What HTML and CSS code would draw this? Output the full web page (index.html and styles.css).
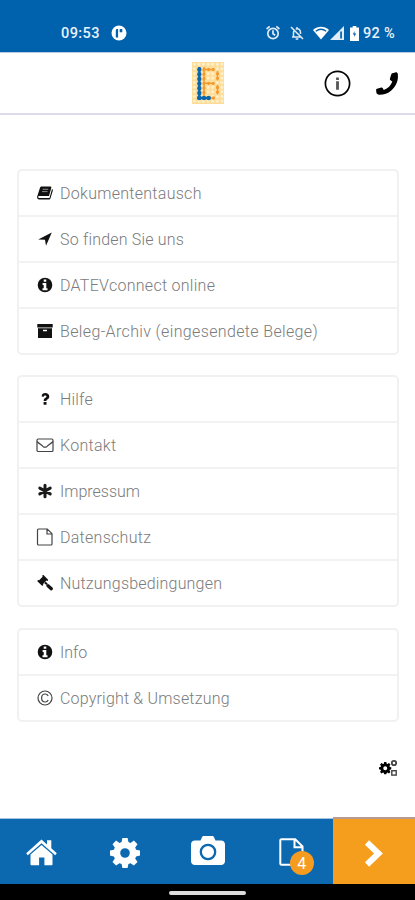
FILE: index.html
```html
<!DOCTYPE html>
<html lang="de">
<head>
<meta charset="utf-8">
<meta name="viewport" content="width=device-width">
<title>Mehr</title>
<link rel="stylesheet" href="styles.css">
</head>
<body>
<svg class="defs" aria-hidden="true">
  <defs>
    <symbol id="info" viewBox="0 0 16 16"><path fill-rule="evenodd" d="M8 .7a7.3 7.3 0 1 0 0 14.6A7.3 7.3 0 0 0 8 .7zM6.7 2.6h2.6v2.2H6.7zM5.6 6h3.7v5.2h1.2v2H5.5v-2h1.2V8H5.6z"/></symbol>
    <symbol id="cog" viewBox="0 0 30 30"><path fill-rule="evenodd" d="M12.4 0h5.2l.8 4 2.1.9L23.900 2.600l3.600 3.600-2.300 3.400.9 2.100 3.900.8v5.100l-3.900.8-.9 2.100 2.300 3.400-3.600 3.600-3.400-2.300-2.100.9-.8 3.900h-5.200l-.8-3.900-2.100-.9-3.400 2.300-3.600-3.600 2.300-3.400-.9-2.100-3.900-.8v-5.100l3.900-.8.9-2.100-2.300-3.400 3.600-3.600 3.400 2.300 2.100-.9zM15 10.200a4.800 4.800 0 1 0 0 9.600 4.800 4.800 0 0 0 0-9.600z"/></symbol>
  </defs>
</svg>
<div class="status">
  <span class="time">09:53</span>
  <svg class="app" width="16" height="16" viewBox="0 0 16 16"><circle cx="8" cy="8" r="7.500" fill="#fff"/><path d="M4.800 12.500V5.500c0-1 .5-1.600 1.400-1.600h.9v8.600zM8.700 3.900h2.600v3.300H8.700z" fill="#0061ad"/></svg>
  <svg class="alarm" width="14" height="16" viewBox="0 0 14 16" fill="none" stroke="#e2ecf7" stroke-width="1.700"><circle cx="7" cy="8.500" r="5.200"/><path d="M7 5.200v3.500l2.200 1.500M.6 4 3.700 1.400M13.400 4l-3.100-2.600"/></svg>
  <svg class="bell" width="14" height="16" viewBox="0 0 14 16" fill="none" stroke="#e2ecf7" stroke-width="1.500"><path d="M2 12h9.500M3.500 12V7.500c0-1 .3-1.700.8-2.300M5.700 4.200C8.500 3 10.500 5 10.500 7.500V9M7 2v2M1 2l12 12M5.700 14h2.600"/></svg>
  <svg class="wifi" width="16" height="14" viewBox="0 0 16 14"><path d="M0 4C4.800-.3 11.200-.3 16 4L8 13.500z" fill="#fff"/><path d="M2.800 5.300c3.200-2.500 7.200-2.500 10.400 0" stroke="#0061ad" stroke-width="1.300" fill="none"/></svg>
  <svg class="signal" width="14" height="14" viewBox="0 0 14 14"><path d="M14 0v14H0z" fill="#e2ecf7"/><path d="M10.200 5.500v7h1.700v-7z" fill="#0061ad"/></svg>
  <svg class="battery" width="9" height="15" viewBox="0 0 9 15"><path d="M2.700 0h3.600v1.500H9V15H0V1.500h2.700z" fill="#fff"/><path d="M4.500 5 2.800 8.500h1.400V11l2-3.500H4.500z" fill="#0061ad"/></svg>
  <span class="percent">92 %</span>
</div>
<header class="header">
  <svg class="logo" width="32" height="42" viewBox="0 0 32 42">
    <defs><pattern id="dots" width="4.600" height="4.600" patternUnits="userSpaceOnUse"><circle cx="2.300" cy="2.300" r="1.500" fill="#fff0cb"/></pattern></defs>
    <path fill="#fddc98" d="M0 0h32v42H0z"/><path fill="url(#dots)" d="M0 0h32v42H0z"/>
    <g fill="none" stroke-width="2.400"><path stroke="#0867ad" d="M7.300 5v33M5.200 36h13"/><path stroke="#f39a2d" stroke-width="1.500" d="M12 5v29M12 7.500h10M12 21.300h10M25.500 9v9.500M25.500 23v9.500M18 36h4"/></g>
    <g fill="none" stroke-width="4.400" stroke-linecap="round"><path stroke="#0867ad" stroke-dasharray="0 4.700" d="M7.300 7.500v28.500M7.300 36h10"/><path stroke="#f39a2d" stroke-width="3.300" stroke-dasharray="0 4.600" d="M12 7.500v24M12 7.500h10M12 21.300h10M25.500 11.700v5M25.500 25.500v5M21.500 36h1"/></g>
  </svg>
  <div class="actions">
    <svg width="27" height="27" viewBox="0 0 27 27"><circle cx="13.500" cy="13.500" r="12.100" fill="none" stroke="#050505" stroke-width="1.700"/><path d="M12.100 7.500h2.800V10h-2.800zM12.100 11.200h2.800v8.600h-2.800z" fill="#555"/></svg>
    <svg class="phone" width="24" height="24" viewBox="0 0 24 24"><path d="m17.300 1.300 3-.9c1.300-.3 2.300.4 2.500 1.600.8 6.500-1.600 12.200-6.500 16.400-3.400 3-7.600 4.400-12.100 4.300-1.600 0-2.600-.8-2.800-2.200l-.3-2.400c-.1-.7.3-1.100.9-1.300l4.300-1.200c.7-.1 1.100.1 1.500.7l1 1.700c4.200-1.800 7.100-4.600 8.500-8.600l-1.800-1.100c-.5-.4-.8-.8-.6-1.500l1.300-4.300c.2-.7.500-1 1.100-1.200z"/></svg>
  </div>
</header>
<main class="content">
  <ul class="card">
    <li class="row"><svg class="icon" viewBox="0 0 16 16"><path d="M4.600 1.500h8.700c.8 0 1.200.6 1 1.300L12 11H2.200c-.7 0-1.200.5-1 1.200.1.500.5.800 1 .8h10.300L15 4c.8.400 1 .9.800 1.700l-2.300 7.500c-.3.900-.8 1.300-1.700 1.300H2.200C.6 14.500-.3 13 .2 11.500L3 2.800c.3-.8.800-1.300 1.600-1.300z"/><path d="M5.700 4.300h5.500M5 6.600h5.500" stroke="#aaa" stroke-width=".8"/></svg><span class="wider">Dokumententausch</span></li>
    <li class="row"><svg class="icon" viewBox="0 0 16 16"><path d="M14.800 1.500 9 14.700 8 8.800 1.200 8.600z"/></svg><span>So finden Sie uns</span></li>
    <li class="row"><svg class="icon"><use href="#info"/></svg><span class="wider">DATEVconnect online</span></li>
    <li class="row"><svg class="icon" viewBox="0 0 16 16"><path fill-rule="evenodd" d="M.3 1h15.400v3.500H.3zM1 5.300h14V15H1zm5 1.500v1.500h4V6.800z"/></svg><span class="widest">Beleg-Archiv (eingesendete Belege)</span></li>
  </ul>
  <ul class="card">
    <li class="row"><svg class="icon" viewBox="0 0 16 16"><path d="M4.600 5.400C4.900 3 6.200 2 8.200 2c2.300 0 4.100 1.400 4.100 3.500 0 1.500-.7 2.200-1.900 3-.8.500-1 .8-1 1.400H6.700c0-1.800.6-2.500 1.700-3.200.7-.4 1-.6 1-1.200s-.5-1-1.200-1c-.8 0-1.200.5-1.500 1.300zM6.600 11h2.900v2.800H6.600z"/></svg><span>Hilfe</span></li>
    <li class="row"><svg class="icon wide line" viewBox="0 0 18 16"><rect x="1" y="2" width="16" height="12.500" rx="1.300"/><path d="M1 4.500c2 2 4 3.200 6 4.900 1.200.9 2.800.9 4 0 2-1.700 4-2.900 6-4.900"/></svg><span class="wider">Kontakt</span></li>
    <li class="row"><svg class="icon" viewBox="0 0 16 16"><path d="M8 2.300v11.400M2.800 5.100l10.400 5.800M13.200 5.100 2.800 10.900" stroke="#1a1a1a" stroke-width="3" stroke-linecap="round"/></svg><span class="tight">Impressum</span></li>
    <li class="row"><svg class="icon wide line" viewBox="0 0 18 18"><path d="M2.500 1h8.800l4.700 4.700V16c0 .6-.4 1-1 1H2.500c-.6 0-1-.4-1-1V2c0-.6.400-1 1-1zM11 1v5h5"/></svg><span class="wider">Datenschutz</span></li>
    <li class="row"><svg class="icon" viewBox="0 0 16 16"><path d="M5.600.2c.4-.3.800-.3 1.100 0l4.200 4.200c.3.300.3.700 0 1l-.4.500-1-.3-3.500 3.500.3 1-.5.500c-.3.300-.7.300-1 0L.6 6.400c-.3-.3-.3-.7 0-1l.5-.5 1 .3 3.500-3.500-.3-1z"/><path d="m8 7.500 2 1.800" stroke="#111" stroke-width="2"/><path d="m11 10.700 3.300 3" stroke="#111" stroke-width="3.200" stroke-linecap="round"/></svg><span>Nutzungsbedingungen</span></li>
  </ul>
  <ul class="card card-last">
    <li class="row"><svg class="icon"><use href="#info"/></svg><span class="tight">Info</span></li>
    <li class="row"><svg class="icon line" viewBox="0 0 16 16"><circle cx="8" cy="8" r="7"/><path d="M11.200 6C10.500 4.600 9.500 4 8.200 4 6 4 4.600 5.600 4.600 8s1.400 4 3.600 4c1.300 0 2.400-.7 3-2"/></svg><span>Copyright &amp; Umsetzung</span></li>
  </ul>
  <svg class="settings" width="19" height="18" viewBox="0 0 19 18"><use href="#cog" x="0" y="3" width="12.500" height="12.500"/><g fill="none" stroke="#444"><circle cx="15" cy="4" r="2.200" stroke-width="1.800"/><rect x="12.800" y="11.700" width="4.400" height="4.400" stroke-width="1.400"/></g></svg>
</main>
<nav class="tabs">
  <a class="tab"><svg width="31" height="27" viewBox="0 0 31 27" fill="#fff"><path d="M15.500.6 21 5.500V1.300h4.300v8l5.500 4.900-1.600 2-13.700-12-13.700 12-1.600-2z"/><path d="m15.500 6 11 9.600v9.600c0 .7-.4 1.100-1.100 1.100h-7v-7.700h-5.300v7.700H5.600c-.7 0-1.100-.4-1.100-1.100v-9.600z"/></svg></a>
  <a class="tab"><svg width="30" height="30" fill="#fff"><use href="#cog"/></svg></a>
  <a class="tab camera"><svg width="34" height="29" viewBox="0 0 34 29"><path d="M4 4.500h5.500L11 1.200C11.300.4 12 0 12.800 0h8.400c.8 0 1.500.4 1.800 1.200l1.500 3.300H30c2.300 0 4 1.500 4 3.700v17c0 2.300-1.700 3.800-4 3.800H4c-2.300 0-4-1.500-4-3.800v-17C0 6 1.700 4.500 4 4.500z" fill="#fff"/><circle cx="17" cy="16" r="7.200" fill="none" stroke="#0c69b0" stroke-width="2.300"/></svg></a>
  <a class="tab docs"><svg width="25" height="28" viewBox="0 0 25 28" fill="none" stroke="#fff" stroke-width="2"><path d="M2.500 1.200h13.700l7.300 7.300V26c0 .5-.4.800-.8.800H2.500c-.7 0-1.200-.4-1.200-1V2.200c0-.6.500-1 1.200-1zM15.500 1.200v8h8"/></svg><span class="badge">4</span></a>
  <a class="tab next"><svg width="20" height="29" viewBox="0 0 20 29"><path d="m3 3.500 11.500 11L3 25.500" fill="none" stroke="#fff" stroke-width="6"/></svg></a>
</nav>
<div class="gesture"><span class="handle"></span></div>
</body>
</html>
```
FILE: styles.css
```css
* { box-sizing: border-box; }
body {
  margin: 0;
  height: 900px;
  display: flex;
  flex-direction: column;
  background: #fff;
  font-family: Roboto, "Liberation Sans", sans-serif;
  overflow: hidden;
}
svg { display: block; flex: none; }
.defs { position: absolute; width: 0; height: 0; }
.status {
  height: 52px;
  flex: none;
  display: flex;
  align-items: center;
  padding: 14px 0 0 61px;
  background: #0061ad;
  color: #eaf2fb;
  font-weight: 500;
  font-size: 14.500px;
}
.time { width: 39px; letter-spacing: .4px; white-space: nowrap; }
.app { margin-left: 11px; }
.alarm { margin-left: 139px; }
.bell { margin-left: 10px; }
.wifi { margin-left: 9px; }
.signal { margin-left: 1px; }
.battery { margin-left: 6px; }
.percent { margin-left: 4px; letter-spacing: .3px; white-space: nowrap; }
.header {
  height: 63px;
  flex: none;
  display: flex;
  align-items: flex-start;
  justify-content: space-between;
  padding: 10px 16px 0 192px;
  border-bottom: 2px solid #dcdbea;
  border-top: 1px solid #b9cce4;
}
.logo { margin-top: -1px; }
.actions { display: flex; gap: 24px; padding-top: 7px; }
.phone { margin-top: 2px; }
.content {
  flex: 1;
  display: flex;
  flex-direction: column;
  gap: 20px;
  padding: 54px 16px 0 17px;
}
.card {
  list-style: none;
  margin: 0;
  padding: 0;
  border: 2px solid #f1f1f1;
  border-radius: 5px;
}
.card-last { margin-top: 1px; }
.row {
  height: 46px;
  display: flex;
  align-items: center;
  gap: 7px;
  padding-left: 18px;
  font-size: 16px;
  font-weight: 300;
  letter-spacing: .19px;
  color: #7b7b7b;
  white-space: nowrap;
}
.row:first-child { height: 44px; }
.row + .row { border-top: 2px solid #f2f2f2; }
.wider { letter-spacing: .28px; }
.widest { letter-spacing: .36px; }
.tight { letter-spacing: 0; }
.icon { width: 16px; height: 16px; fill: #111; }
.wide { width: 18px; height: 18px; margin: 0 -1px; }
.line { fill: none; stroke: #444; stroke-width: 1.200; }
.settings { align-self: flex-end; margin: 17px 1px 0 0; }
.tabs {
  height: 67px;
  flex: none;
  display: grid;
  grid-template-columns: repeat(4, 83.250px) 1fr;
  background: linear-gradient(#fff 1px, #a8c2df 1px, #a8c2df 2px, #0c69b0 2px);
}
.tab { display: flex; align-items: center; justify-content: center; padding-top: 4px; }
.camera { padding: 0; }
.docs { position: relative; padding-top: 3px; }
.badge {
  position: absolute;
  left: 40px;
  top: 34px;
  width: 24px;
  height: 24px;
  border-radius: 50%;
  background: #f59c20;
  color: #fff;
  font-size: 16px;
  line-height: 26px;
  text-align: center;
}
.next { background: #f59e1e; border-top: 2px solid #b99c91; }
.gesture {
  height: 16px;
  flex: none;
  display: flex;
  justify-content: center;
  padding-top: 7px;
  background: #000;
}
.handle { width: 77px; height: 4px; border-radius: 2px; background: #ddd; }
```
